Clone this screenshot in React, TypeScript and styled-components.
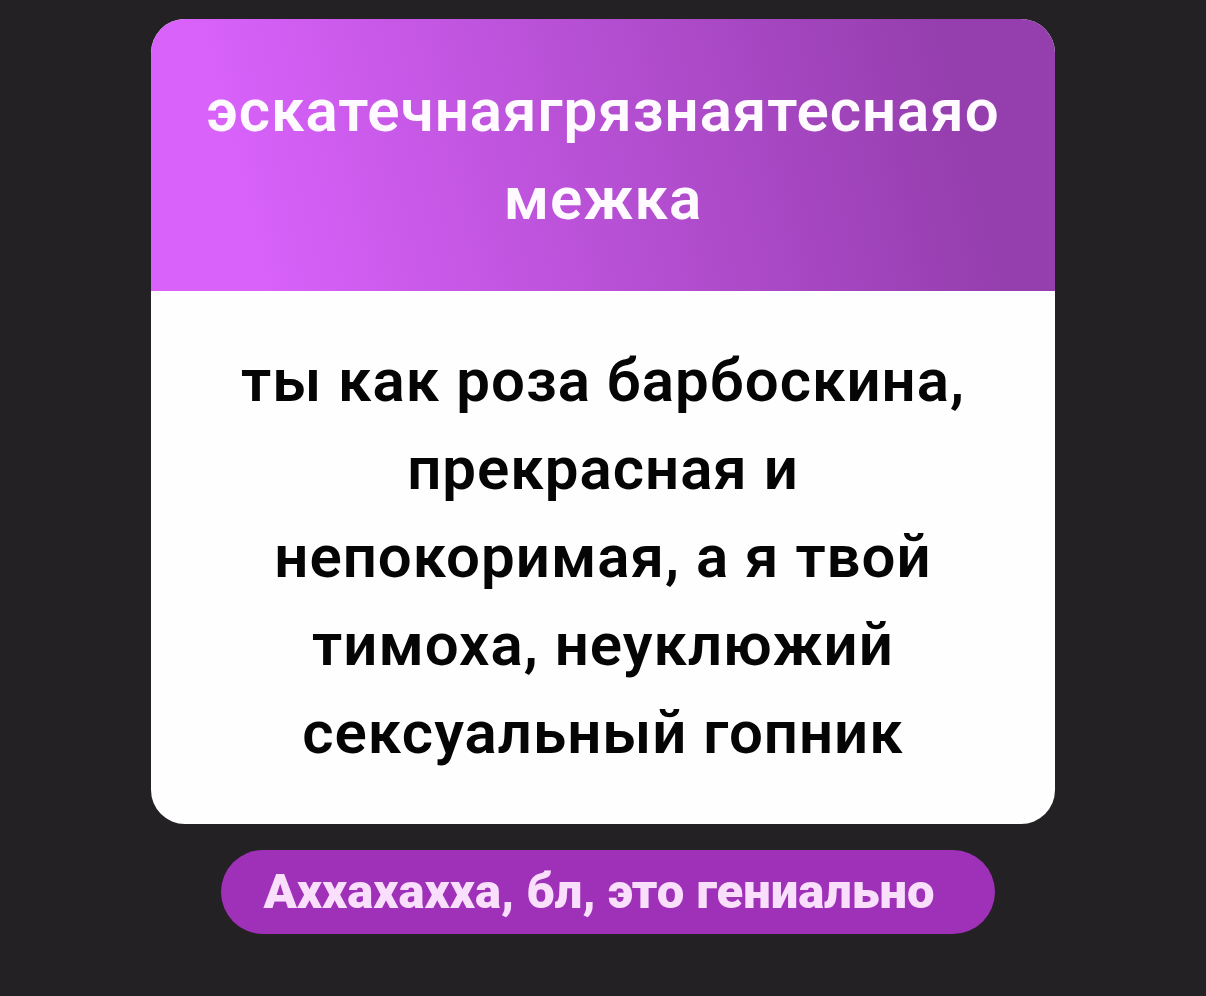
import React from "react";
import styled, { createGlobalStyle } from "styled-components";

const GlobalStyle = createGlobalStyle`
  * { box-sizing: border-box; }
  body {
    margin: 0;
    background: #232124;
    font-family: Roboto, "Liberation Sans", sans-serif;
  }
`;

const Page = styled.main`
  min-height: 100vh;
  display: flex;
  flex-direction: column;
  align-items: center;
  gap: 26px;
  padding: 19px 0 48px;
`;

const Card = styled.article`
  width: 75%;
  border-radius: 34px;
  overflow: hidden;
  background: #fefefe;
  font-size: 60px;
  font-weight: 600;
  line-height: 88px;
  letter-spacing: 1px;
  text-align: center;
`;

const Question = styled.h1`
  margin: 0;
  padding: 48px 52px;
  background: linear-gradient(76deg, #d962fb 11%, #953eae 88%);
  color: #fffaff;
  font: inherit;
  overflow-wrap: anywhere;
`;

const Answer = styled.p`
  margin: 0;
  padding: 46px 84px 47px;
  color: #050505;
`;

const Caption = styled.p`
  margin: 0 0 0 10px;
  padding: 0 60px 0 42px;
  border-radius: 42px;
  background: #9f31b9;
  color: #f9dffb;
  font-size: 49px;
  font-weight: 900;
  line-height: 84px;
`;

export default function App() {
  return (
    <>
      <GlobalStyle />
      <Page>
        <Card>
          <Question>эскатечнаягрязнаятеснаяомежка</Question>
          <Answer>
            ты как роза барбоскина, прекрасная и непокоримая, а я твой тимоха,
            неуклюжий сексуальный гопник
          </Answer>
        </Card>
        <Caption>Аххахахха, бл, это гениально</Caption>
      </Page>
    </>
  );
}
